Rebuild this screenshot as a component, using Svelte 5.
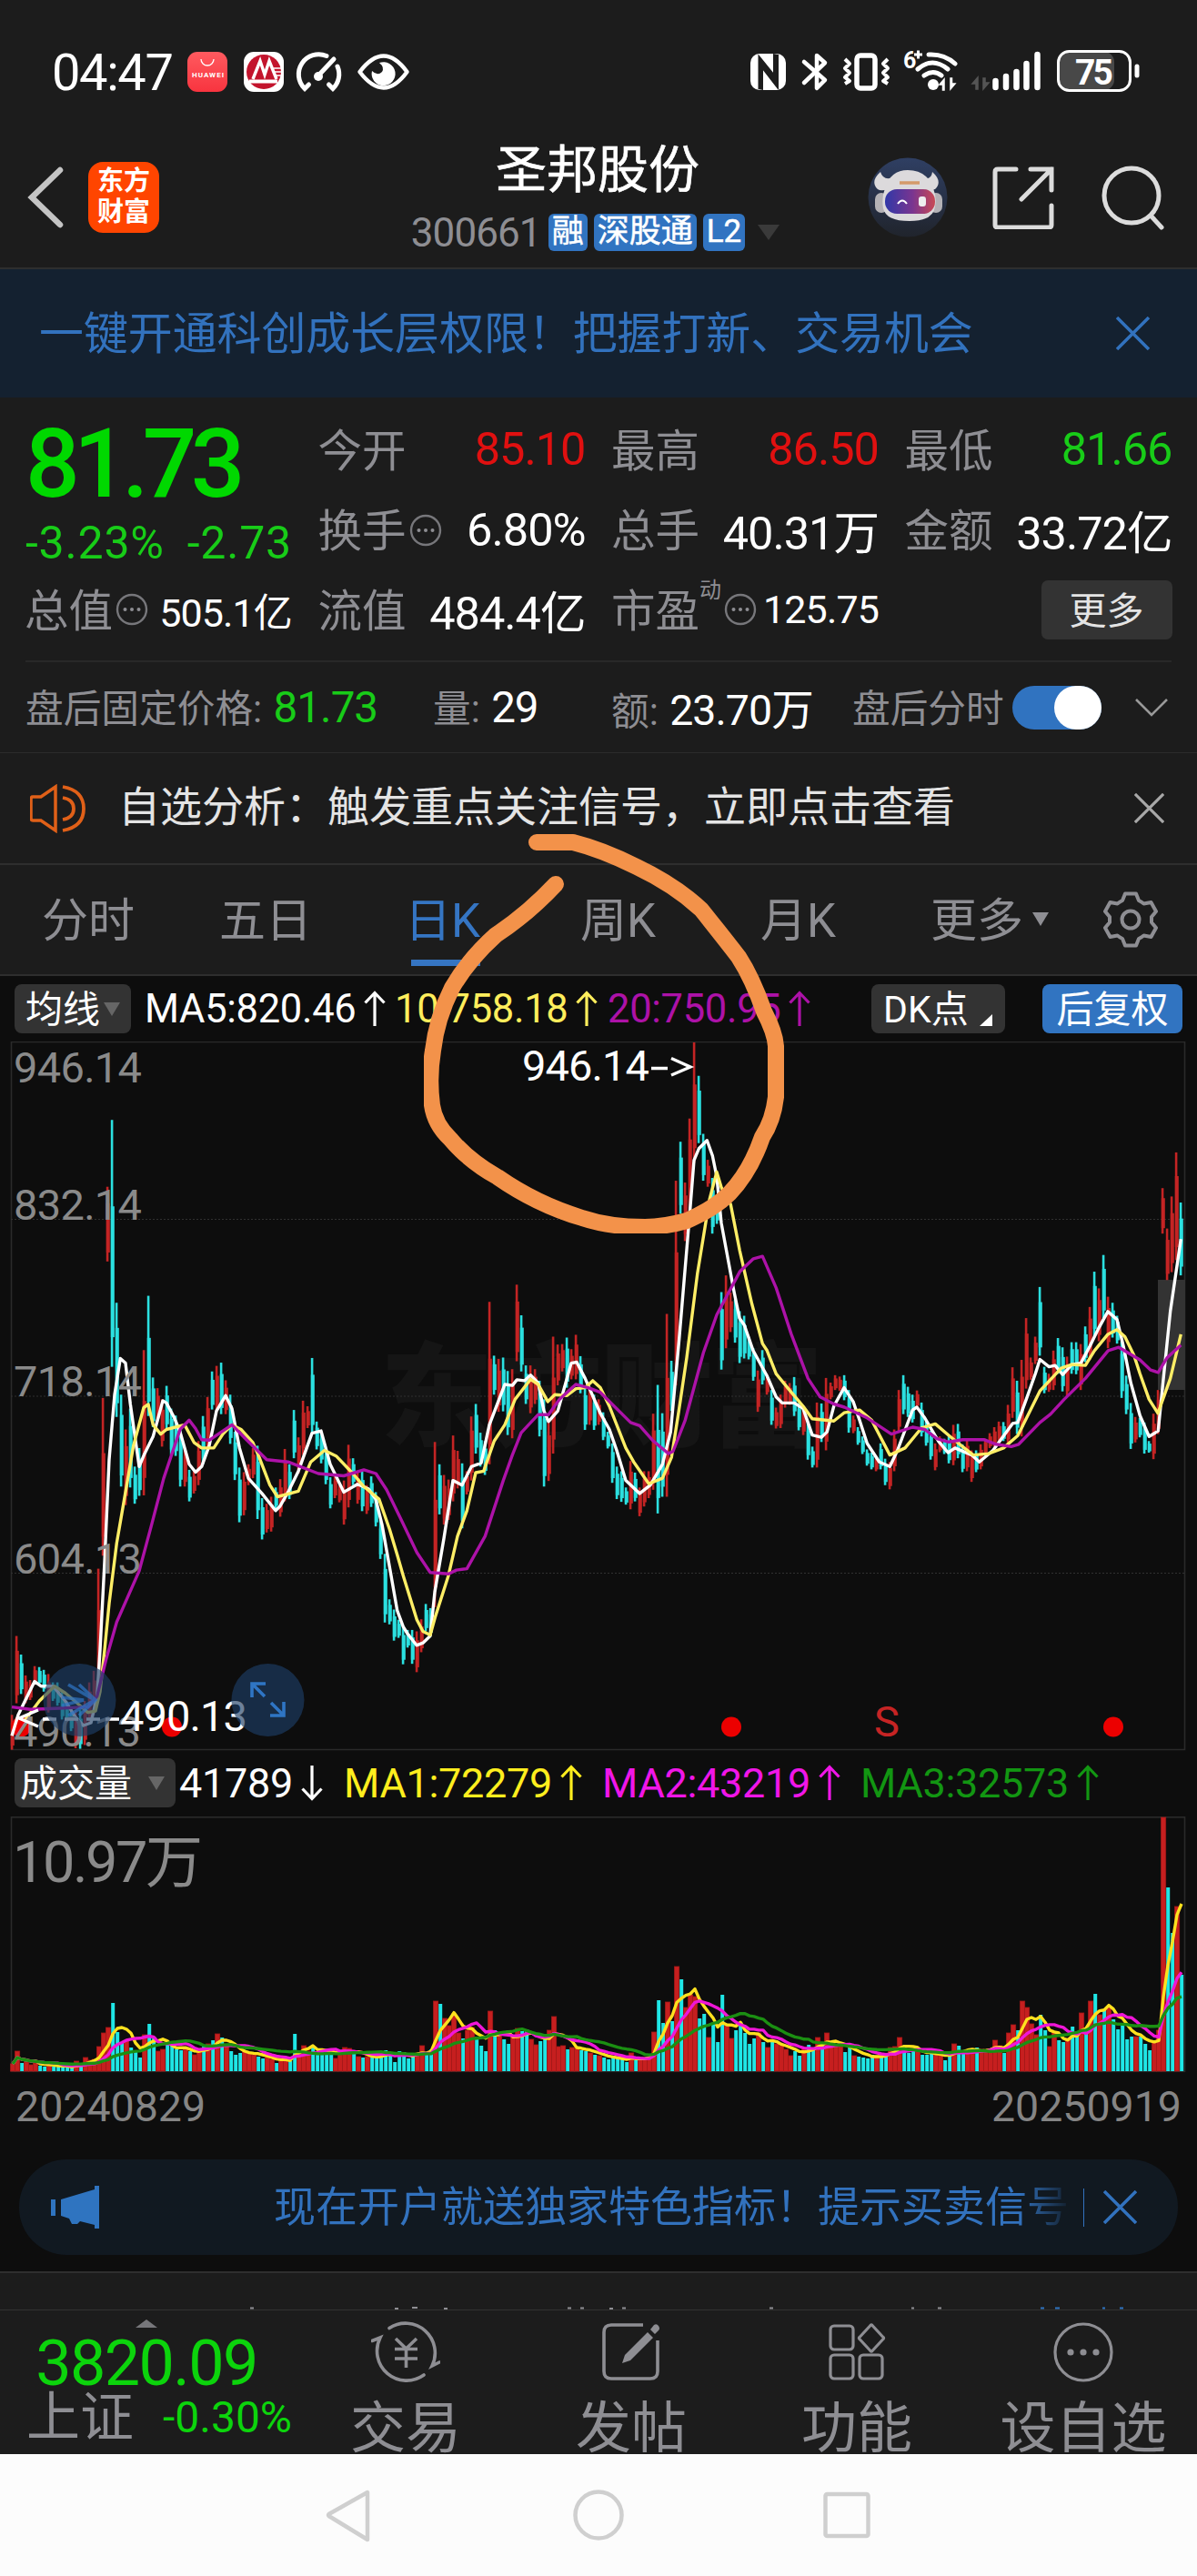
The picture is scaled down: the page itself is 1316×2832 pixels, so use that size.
<script lang="ts">
  const tabs = ["分时", "五日", "日K", "周K", "月K", "更多"];
  const activeTab = "日K";

  // one entry per day: u = up, d = down, then high and low as offsets from the period high
  const days = `u1480-1555 u1310-1455 d1350-1435 u1395-1455 u1405-1448 u1375-1415 d1377-1415 d1383-1430 u1392-1475 d1410-1450
    d1410-1460 d1430-1490 d1450-1495 d1465-1515 u1470-1552 d1470-1553 u1450-1545 u1410-1500 u1385-1480 u1165-1420
    u797-1137 u342-503 d198-730 d592-838 d790-988 u865-1028 d820-990 d945-1025 d905-1008 u694-1007
    d577-836 d753-860 u776-850 u800-902 d771-865 d820-920 d835-922 d865-988 u905-988 d952-1020
    u955-1003 u890-985 d836-940 u795-905 d740-822 u728-825 d721-832 u759-832 d790-896 d870-974
    d947-1065 u957-1050 u940-985 u905-970 d900-1058 d1013-1102 u1025-1087 u1010-1085 d990-1035 u972-1053
    u907-1020 d940-1015 d823-927 u882-960 u803-920 u815-862 d711-875 d848-908 d870-938 d905-983
    d968-1035 u965-1013 u985-1022 u975-1070 u898-1033 d927-985 u955-1025 d955-1041 u985-1047 d966-1032
    d1000-1074 d1060-1144 d1133-1281 d1231-1285 d1253-1320 d1275-1314 d1290-1371 d1297-1335 d1297-1370 u1300-1388
    u1274-1345 d1241-1300 d1250-1310 u892-1248 d940-1048 u963-1070 u973-1060 u878-1020 u911-992 d938-1078
    u955-1005 u837-975 d810-917 d872-945 d890-963 u590-940 d706-790 u713-827 d710-826 d739-877
    u735-884 u553-718 d619-740 d727-810 u727-830 u735-810 d760-880 d800-988 u850-976 u665-917
    u682-770 u681-740 d667-775 u692-757 u661-757 d707-787 d770-866 u775-855 d790-866 u800-855
    d828-888 d870-906 d895-980 d945-1015 d955-1021 d990-1027 u933-1037 d958-1020 u990-1052 u955-1031
    u955-1013 u831-995 d769-1046 d830-1010 u616-1010 d717-825 u329-770 d245-400 u333-459 u195-400
    u31-290 d103-248 d228-329 u284-342 d323-443 d360-422 d569-736 u533-690 u570-655 d585-678
    d610-722 d620-712 d665-714 d690-760 u738-827 d694-768 u745-790 d780-855 u818-863 u790-862
    u760-818 u765-812 d752-836 d808-867 u815-877 d850-930 d902-947 u807-947 d809-892 u754-910
    u764-800 u748-780 u751-782 d748-802 d780-872 u835-873 d860-898 d880-918 d908-943 d915-951
    u922-955 d895-951 d928-985 u935-994 u865-955 u780-870 d748-832 d773-838 d790-850 u781-818
    d807-880 d847-900 d868-930 u895-953 u880-914 d885-918 d880-938 u855-942 d853-927 d897-957
    u885-955 u910-978 d910-957 u897-951 u885-920 u873-905 u860-902 u848-892 d849-890 u812-897
    u731-840 d760-875 u715-880 u625-777 u710-758 u665-724 d558-706 d730-787 u745-784 u695-780
    d668-745 d688-783 u708-793 d677-745 d677-746 u681-780 d643-720 u601-715 d525-665 u561-675
    d489-625 u579-690 d592-667 d620-680 d675-797 d749-832 d808-907 u838-893 d840-882 d850-917
    d890-915 u831-929 u780-875 u345-443 u432-543 u363-526 u268-500 d376-533`;

  const volumes = [
    8, 22, 9, 10, 7, 9, 6, 5, 9, 5, 5, 5, 4, 4, 11, 7, 15, 12, 13, 27, 42, 48, 75, 43, 32, 33, 26, 21, 15, 40,
    52, 38, 22, 24, 30, 28, 24, 23, 24, 22, 18, 22, 28, 30, 34, 41, 37, 28, 22, 18, 20, 22, 20, 18, 16, 14, 15, 13, 9, 12,
    14, 11, 41, 22, 28, 22, 27, 20, 21, 24, 22, 14, 20, 26, 25, 20, 16, 15, 16, 15, 16, 18, 23, 20, 10, 22, 21, 14, 17, 20,
    28, 20, 24, 77, 74, 58, 50, 63, 42, 36, 45, 48, 38, 28, 22, 66, 45, 40, 35, 30, 38, 47, 44, 46, 35, 29, 33, 38, 45, 60,
    27, 28, 24, 26, 25, 23, 22, 20, 18, 17, 15, 13, 15, 14, 13, 10, 20, 12, 13, 14, 15, 43, 78, 53, 76, 55, 115, 101, 70, 84,
    82, 58, 63, 37, 52, 32, 84, 50, 36, 45, 54, 42, 30, 36, 42, 32, 26, 32, 30, 28, 24, 17, 22, 17, 26, 29, 24, 37, 28, 42,
    30, 28, 27, 21, 29, 17, 16, 15, 14, 18, 17, 16, 20, 26, 27, 37, 27, 20, 24, 22, 18, 18, 20, 18, 19, 12, 18, 30, 28, 20,
    20, 22, 26, 24, 22, 24, 34, 28, 20, 42, 51, 45, 77, 70, 52, 40, 62, 45, 27, 42, 34, 32, 36, 49, 42, 64, 44, 77, 85, 62,
    68, 70, 57, 46, 50, 35, 38, 38, 38, 30, 23, 32, 45, 279, 202, 152, 181, 106,
  ];

  const ma5 = `39,1525 60,1480 114,1408 135,1418 175,1418 215,1450 249,1485 275,1503 300,1497 320,1440 330,1340 345,1150 360,930 378,790
    397,712 414,722 430,810 459,945 475,920 505,880 537,803 549,808 575,840 594,870 624,940 645,957 665,945 690,900 714,825 744,792
    765,820 790,905 819,970 864,1003 909,1040 924,1030 950,1000 984,955 1029,873 1059,868 1089,940 1134,1000 1179,983 1215,993
    1239,1015 1260,1070 1290,1180 1310,1255 1330,1290 1344,1305 1374,1330 1395,1325 1419,1310 1434,1215 1464,1100 1494,975 1524,985
    1555,945 1587,937 1614,855 1665,768 1690,770 1705,758 1730,760 1750,748 1775,765 1794,825 1809,848 1840,825 1884,722 1902,720
    1930,755 1980,830 2010,865 2034,910 2064,975 2110,1003 2145,985 2185,940 2212,870 2240,670 2275,400 2289,285 2305,260 2332,242
    2350,275 2364,320 2379,420 2420,565 2439,625 2455,640 2484,695 2530,750 2560,795 2580,808 2620,808 2649,820 2679,877 2709,882
    2728,870 2750,815 2784,775 2814,805 2835,845 2860,895 2900,935 2935,945 2960,910 3010,823 3024,817 3050,840 3095,890 3127,915
    3150,905 3205,920 3230,935 3275,910 3340,852 3357,850 3385,800 3415,745 3430,714 3460,730 3480,727 3505,747 3535,725 3565,722
    3595,685 3625,645 3654,611 3684,628 3705,685 3730,765 3760,835 3790,880 3820,868 3835,770 3860,610 3895,455`;
  const ma10 = `84,1490 130,1450 180,1418 215,1433 255,1455 290,1475 315,1472 330,1430 345,1340 360,1240 385,1110 414,1000 440,900 474,818
    489,811 505,855 530,875 549,865 609,855 640,893 665,905 705,905 735,875 765,855 795,865 834,893 855,925 890,985 915,1010 984,998
    1025,935 1070,910 1110,923 1164,960 1200,988 1250,1015 1285,1080 1310,1135 1330,1180 1375,1275 1395,1300 1419,1308 1435,1270
    1479,1180 1509,1095 1540,1040 1569,958 1595,955 1630,890 1665,855 1699,800 1750,757 1775,768 1807,805 1830,790 1869,792 1900,777
    1930,775 1955,760 1980,775 2010,815 2064,905 2090,935 2140,982 2185,970 2215,925 2240,820 2265,710 2300,530 2340,370 2364,310
    2380,345 2410,380 2440,480 2480,595 2515,680 2530,695 2560,745 2610,785 2649,815 2679,842 2750,847 2784,829 2835,823 2875,845
    2935,920 2985,905 3039,862 3085,853 3130,878 3165,897 3210,920 3260,917 3310,905 3357,878 3430,782 3500,733 3535,725 3580,727
    3610,695 3654,660 3684,650 3710,665 3740,705 3760,745 3790,800 3819,830 3860,755 3895,660`;
  const ma20 = `39,1463 100,1468 180,1466 290,1463 320,1440 350,1360 385,1280 459,1170 500,1070 540,970 594,865 624,845 645,863 665,887
    690,888 765,855 810,885 880,930 950,935 1050,960 1134,965 1200,952 1240,960 1275,995 1320,1055 1375,1130 1419,1173 1480,1176
    1505,1168 1540,1165 1600,1095 1660,975 1690,920 1719,872 1775,833 1809,833 1845,800 1899,768 1940,775 1980,785 2080,850 2110,857
    2155,890 2205,917 2220,912 2260,845 2320,700 2364,618 2440,525 2485,497 2515,492 2560,560 2610,660 2665,755 2705,795 2750,810
    2785,817 2860,840 2940,875 3010,860 3050,865 3090,885 3130,892 3175,887 3245,887 3285,897 3335,902 3360,897 3430,850 3465,832
    3510,800 3580,755 3655,695 3690,688 3760,715 3795,737 3820,742 3850,710 3895,683`;

  const toY = (v: number) => (v - 30) / 1.96 + 0.5;
  const dayX = (i: number) => 13 + i * 5;

  const candles = days.split(/\s+/).map((d, i) => {
    const [high, low] = d.slice(1).split("-").map(Number);
    const range = low - high;
    const gap = range > 250 ? 0.35 : 0.22;
    return {
      up: d[0] === "u",
      x: dayX(i),
      top: toY(high),
      bottom: toY(low),
      bodyTop: toY(high + range * gap),
      bodyBottom: toY(low - range * 0.12),
    };
  });

  const toLine = (s: string) =>
    s
      .split(/\s+/)
      .map((p) => {
        const [x, y] = p.split(",").map(Number);
        return `${(x / 3).toFixed(1)},${toY(y).toFixed(1)}`;
      })
      .join(" ");

  const average = (n: number) =>
    volumes
      .map((_, i) => {
        const part = volumes.slice(Math.max(0, i - n + 1), i + 1);
        const mean = part.reduce((a, b) => a + b, 0) / part.length;
        return `${dayX(i) + 1},${(280 - mean).toFixed(1)}`;
      })
      .join(" ");

  const fellOnVolume = [254, 255];
  const volumeUp = (i: number) => candles[i].up && !fellOnVolume.includes(i);
</script>

{#snippet info()}
  <svg class="info" width="36" height="36" viewBox="0 0 36 36">
    <circle cx="18" cy="18" r="16" fill="none" stroke="#77777b" stroke-width="2.4" />
    <circle cx="10.5" cy="18" r="2" fill="#8e8e93" />
    <circle cx="18" cy="18" r="2" fill="#8e8e93" />
    <circle cx="25.5" cy="18" r="2" fill="#8e8e93" />
  </svg>
{/snippet}

{#snippet arrow(down = false)}
  <svg class="arrow" class:down width="26" height="40" viewBox="0 0 26 40">
    <path d="M13 39V3M2.500 13.500L13 2.500l10.500 11" fill="none" stroke="currentColor" stroke-width="3.2" />
  </svg>
{/snippet}

{#snippet cross(size)}
  <svg width={size} height={size} viewBox="0 0 36 36">
    <path d="M1 1l34 34M35 1L1 35" stroke="currentColor" stroke-width="3.4" />
  </svg>
{/snippet}

<div class="phone">
  <div class="status">
    <span class="clock">04:47</span>
    <svg width="250" height="50" viewBox="200 50 250 50">
      <defs>
        <linearGradient id="huawei" x1="0" y1="0" x2="0" y2="1">
          <stop offset="0" stop-color="#ff5a5f" />
          <stop offset="1" stop-color="#f8343f" />
        </linearGradient>
      </defs>
      <rect x="206" y="57" width="44" height="44" rx="11" fill="url(#huawei)" />
      <path d="M221 65a7 7 0 0 0 14 0" fill="none" stroke="#fff" stroke-width="1.3" />
      <text x="211" y="85" class="tiny" textLength="35">HUAWEI</text>
      <rect x="268" y="57" width="44" height="44" rx="11" fill="#fff" />
      <circle cx="290" cy="79" r="19" fill="#c3142d" />
      <path d="M278 87l8-20 5 15 5-15 8 20" fill="none" stroke="#fff" stroke-width="3.400" />
      <path d="M301 75h11M302 79h10M303 83h9" stroke="#fff" stroke-width="1.600" />
      <path d="M274 89.500h31" stroke="#fff" stroke-width="4" />
      <g fill="none" stroke="#fff" stroke-width="5" stroke-linecap="round">
        <path d="M359 61.500A22 22 0 0 0 335 97.500l4.500-4.500M371 73A22 22 0 0 1 366 97.500l-4.500-4.500M351 82L367 65" />
        <path d="M395.500 79Q422 44 447.500 79Q422 114 395.500 79z" stroke-width="4.500" stroke-linejoin="round" />
      </g>
      <circle cx="350" cy="84" r="5" fill="#fff" />
      <path d="M417 69a13 13 0 1 1-8 9q6 6 11 1q3-5-3-10z" fill="#fff" />
    </svg>
    <svg class="system" width="440" height="50" viewBox="820 50 440 50">
      <rect x="825" y="59" width="39" height="40" rx="10" fill="#fff" />
      <path d="M833.500 60V98L839 99V75L851 85V81L834 60zM856 98V60L850 59V83L838 72V76L855 98z" fill="#1c1c1c" />
      <path d="M884 68l23 20-9 9V61l9 8-23 22" fill="none" stroke="#fff" stroke-width="4.500" stroke-linejoin="round" stroke-linecap="round" />
      <rect x="942" y="61" width="20" height="36" rx="4" fill="none" stroke="#fff" stroke-width="5.500" />
      <path d="M929 65l5 5-5 5 5 5-5 5 5 4-5 3M976 65l-5 5 5 5-5 5 5 5-5 4 5 3" fill="none" stroke="#fff" stroke-width="4" stroke-linejoin="round" />
      <text x="993" y="75" class="six">6</text>
      <path d="M1005 60h9M1009.500 55.500v9" stroke="#fff" stroke-width="3" />
      <g fill="none" stroke="#fff" stroke-width="5" stroke-linecap="round">
        <path d="M1021 60Q1038 59 1050 70M1009 76Q1025 62 1042 76M1016 83Q1026 76 1035 83" />
      </g>
      <circle cx="1026" cy="93" r="6" fill="#fff" />
      <path d="M1033 93l5-6v12h-1.500V93zM1050 92l-5 6V86h1.500v6z" fill="#fff" stroke="#fff" stroke-width="1.500" />
      <path d="M1069 92l6-7v13h-2V92zM1087 91l-6 7V86h2v5z" fill="#555" stroke="#555" stroke-width="1.500" />
      <path d="M1094.500 89v7M1106 84v12M1117.500 79v17M1128.500 70v26M1140.500 60v36" stroke="#fff" stroke-width="6.500" stroke-linecap="round" />
      <rect x="1164" y="57" width="61" height="42" rx="11" fill="#484848" />
      <rect x="1163.500" y="56.500" width="79" height="43" rx="12" fill="none" stroke="#fff" stroke-width="3" />
      <path d="M1250 73v10" stroke="#fff" stroke-width="5" stroke-linecap="round" />
      <text x="1182" y="93" class="battery" textLength="42">75</text>
    </svg>
  </div>

  <header>
    <div class="left">
      <svg width="42" height="68" viewBox="0 0 42 68">
        <path d="M38 4L7 34l31 30" fill="none" stroke="#c4c4c4" stroke-width="6.500" stroke-linecap="round" />
      </svg>
      <div class="logo">东方<br />财富</div>
    </div>
    <div class="title">
      <h1>圣邦股份</h1>
      <div class="code">
        <span class="num">300661</span>
        <b>融</b><b>深股通</b><b>L2</b>
        <i class="caret"></i>
      </div>
    </div>
    <div class="actions">
      <svg width="88" height="88" viewBox="0 0 88 88">
        <defs>
          <linearGradient id="sky" x1="0" y1="0" x2="0" y2="1">
            <stop offset="0" stop-color="#2f3f63" />
            <stop offset="1" stop-color="#20242c" />
          </linearGradient>
          <linearGradient id="visor">
            <stop offset="0" stop-color="#3038a8" />
            <stop offset=".55" stop-color="#7a3590" />
            <stop offset="1" stop-color="#c84a55" />
          </linearGradient>
        </defs>
        <circle cx="44" cy="44" r="43.500" fill="url(#sky)" />
        <path d="M14 16Q5 24 8 31Q11 39 22 35L28 22Q17 26 14 16zM71 16Q80 24 77 31Q74 38 66 35L59 22Q70 26 71 16z" fill="#dcdadc" />
        <rect x="8" y="39" width="14" height="22" rx="7" fill="#b4b2b6" />
        <rect x="68" y="39" width="14" height="22" rx="7" fill="#b4b2b6" />
        <path d="M19 34Q25 14 44 14Q65 14 72 34Q76 44 74 54Q72 70 46 70Q20 70 17 56Q15 44 19 34z" fill="#dcdadc" />
        <rect x="19" y="35" width="55" height="27" rx="13" fill="url(#visor)" />
        <path d="M33 51q5-7 10 0" fill="none" stroke="#fff" stroke-width="2" />
        <rect x="56" y="43" width="8" height="11" rx="3" fill="#eee" />
        <path d="M35 28h22" stroke="#d49a6a" stroke-width="3.500" />
      </svg>
      <svg width="70" height="70" viewBox="0 0 70 70">
        <path d="M27 4H7q-3 0-3 3v58q0 3 3 3h56q3 0 3-3V44M43 4h23v23M66 4L33 37" fill="none" stroke="#dcdcdc" stroke-width="5" stroke-linecap="round" />
      </svg>
      <svg width="72" height="72" viewBox="0 0 72 72">
        <circle cx="34" cy="34" r="30" fill="none" stroke="#dcdcdc" stroke-width="5" />
        <path d="M56 57l11 12" stroke="#dcdcdc" stroke-width="5" stroke-linecap="round" />
      </svg>
    </div>
  </header>

  <div class="banner">
    <span>一键开通科创成长层权限！把握打新、交易机会</span>
    {@render cross(37)}
  </div>

  <section class="quote">
    <div class="price">81.73</div>
    <div class="cell"><label>今开</label><em class="red">85.10</em></div>
    <div class="cell"><label>最高</label><em class="red">86.50</em></div>
    <div class="cell"><label>最低</label><em class="green">81.66</em></div>
    <div class="cell change"><em class="green">-3.23%</em><em class="green">-2.73</em></div>
    <div class="cell"><label>换手{@render info()}</label><em>6.80%</em></div>
    <div class="cell"><label>总手</label><em>40.31万</em></div>
    <div class="cell"><label>金额</label><em>33.72亿</em></div>
    <div class="cell"><label>总值{@render info()}</label><em class="small">505.1亿</em></div>
    <div class="cell"><label>流值</label><em>484.4亿</em></div>
    <div class="cell"><label>市盈<sup>动</sup>{@render info()}</label><em class="small">125.75</em></div>
    <div class="cell more"><button>更多</button></div>
  </section>

  <div class="after">
    <span class="a1">盘后固定价格: <em class="green">81.73</em></span>
    <span class="a2">量: <em>29</em></span>
    <span class="a3">额: <em>23.70万</em></span>
    <span class="a4">盘后分时</span>
    <i class="toggle"></i>
    <svg width="36" height="22" viewBox="0 0 36 22">
      <path d="M1 2l17 17L35 2" fill="none" stroke="#999" stroke-width="2.600" />
    </svg>
  </div>

  <div class="signal">
    <svg width="62" height="54" viewBox="0 0 62 54">
      <path d="M3 14h9L28 3v48L12 40H3q-2 0-2-3V17q0-3 2-3z" fill="none" stroke="#e06018" stroke-width="3.500" />
      <path d="M36 3q23 4 23 24T36 51M36 15q12 2 12 12T36 39" fill="none" stroke="#e06018" stroke-width="3.800" />
    </svg>
    <span>自选分析：触发重点关注信号，立即点击查看</span>
    {@render cross(33)}
  </div>

  <nav class="tabs">
    {#each tabs as tab}
      <span class:active={tab === activeTab}>
        {tab}{#if tab === "更多"}<i class="caret"></i>{/if}
      </span>
    {/each}
    <svg width="62" height="62" viewBox="-31 -31 62 62">
      <path
        d="M-6-28.500H6L9-21Q12-19.500 14.500-17.500L22.500-19 28-9 23-3V3L28 9 22.500 19 14.500 17.500Q12 19.500 9 21L6 28.500H-6L-9 21Q-12 19.500-14.500 17.500L-22.500 19-28 9-23 3V-3L-28-9-22.500-19-14.500-17.500Q-12-19.500-9-21z"
        fill="none"
        stroke="#8e8e93"
        stroke-width="4"
        stroke-linejoin="round"
      />
      <circle r="9.500" fill="none" stroke="#8e8e93" stroke-width="4" />
    </svg>
  </nav>

  <section class="chart">
    <div class="legend">
      <button class="pick"><span>均线</span><i class="caret"></i></button>
      <span class="white">MA5:820.46{@render arrow()}</span>
      <span class="yellow">10:758.18{@render arrow()}</span>
      <span class="purple">20:750.95{@render arrow()}</span>
      <button class="dk"><span>DK点</span><i class="corner"></i></button>
      <button class="blue"><span>后复权</span></button>
    </div>

    <svg class="plot" width="1316" height="780" viewBox="0 0 1316 780">
      <text x="418" y="435" class="mark" textLength="487">东方财富</text>
      <path d="M12.500 0V778.500H1302.500V.5H12" fill="none" stroke="#2a2a2a" stroke-width="1.600" />
      <path d="M12 195.500H1303M12 390H1303M12 584.500H1303" stroke="#303030" stroke-dasharray="2 2" />
      <rect x="1273" y="262" width="30" height="121" fill="#333" />
      {#each candles as c}
        <g class={c.up ? "up" : "fall"}>
          <rect x={c.x - 1.2} y={c.top} width="2.6" height={c.bottom - c.top} />
          <rect x={c.x - 1.2} y={c.bodyTop} width="4" height={c.bodyBottom - c.bodyTop} />
        </g>
      {/each}
      <circle cx="23" cy="753.500" r="11" fill="#ec0000" />
      <circle cx="189" cy="753.500" r="11" fill="#ec0000" />
      <circle cx="804" cy="753.500" r="11" fill="#ec0000" />
      <circle cx="1224" cy="753.500" r="11" fill="#ec0000" />
      <text x="961" y="764" class="sell">S</text>
      <polyline points={toLine(ma5)} stroke="#fff" />
      <polyline points={toLine(ma10)} stroke="#ffee66" />
      <polyline points={toLine(ma20)} stroke="#ad12a8" />
      <g class="axis">
        <text x="15" y="45" textLength="141">946.14</text>
        <text x="15" y="196" textLength="141">832.14</text>
        <text x="15" y="390" textLength="141">718.14</text>
        <text x="15" y="585" textLength="141">604.13</text>
        <text x="15" y="775" textLength="140">490.13</text>
      </g>
      <text x="132" y="757.500" class="peak" textLength="140">490.13</text>
      <path d="M42 735L21 744l21 9M47 745h15M71 745h15M95 745h15M116 745h15" fill="none" stroke="#fff" stroke-width="3.400" />
      <text x="574" y="42.500" class="peak" textLength="140">946.14</text>
      <path d="M716 29.500h18M738 18.500l21 9.500-21 9" fill="none" stroke="#fff" stroke-width="3.400" />
      <g fill="#1d3e66" fill-opacity=".65">
        <circle cx="87.500" cy="724" r="40" />
        <circle cx="294.500" cy="724" r="40" />
      </g>
      <g fill="none" stroke="#2f75c4" stroke-width="3.600">
        <path d="M75 707l29 17-29 17M87 707l18 17-18 17M68 721l24 3-24 6" stroke-opacity=".7" />
        <path d="M277 721v-15h15M277 706l14 14M312 726v15h-15M312 741l-14-14" />
      </g>
    </svg>

    <div class="legend volume">
      <button class="pick"><span>成交量</span><i class="caret"></i></button>
      <span class="white">41789{@render arrow(true)}</span>
      <span class="bright">MA1:72279{@render arrow()}</span>
      <span class="pink">MA2:43219{@render arrow()}</span>
      <span class="leaf">MA3:32573{@render arrow()}</span>
    </div>

    <svg class="plot" width="1316" height="282" viewBox="0 0 1316 282">
      <rect x="12.500" y=".8" width="1290" height="279.500" fill="none" stroke="#2a2a2a" stroke-width="1.600" />
      {#each volumes as v, i}
        <rect
          class={volumeUp(i) ? "upbar" : "fallbar"}
          x={volumeUp(i) ? dayX(i) - 1.5 : dayX(i) - 0.8}
          y={280 - v}
          width={volumeUp(i) ? 5.2 : 4}
          height={v}
        />
      {/each}
      <polyline points={average(5)} stroke="#ffe11e" />
      <polyline points={average(10)} stroke="#f016d8" />
      <polyline points={average(20)} stroke="#1b8f12" />
      <text x="14" y="72" class="max" textLength="209">10.97万</text>
    </svg>

    <div class="dates"><span>20240829</span><span>20250919</span></div>

    <div class="promo">
      <svg width="56" height="48" viewBox="0 0 56 48">
        <path d="M0 15h5v18H0zM11 15L48 4V0h5v47h-5v-4l-16-4-3 3-6 0-3-6-9-3z" fill="#2f74c0" />
      </svg>
      <span>现在开户就送独家特色指标！提示买卖信号</span>
      <i></i>
      {@render cross(37)}
    </div>
  </section>

  <!-- only the tops of the next tab row show above the bar -->
  <div class="peek">
    <svg width="1316" height="3" viewBox="0 0 1316 3">
      <path d="M275 1.500h4M434 2h4M453 1h6M488 2h4M624 1.500h4M638 1.500h4M670 2h4M684 1.500h4M846 1.500h4M1002 1.500h3M1031 1.500h4" stroke="#8e8e93" stroke-width="2" />
      <path d="M1144 1.500h4M1160 1.500h5M1212 1.500h3M1231 1.500h4" stroke="#2f74c0" stroke-width="2" />
    </svg>
  </div>

  <footer>
    <div class="index">
      <i class="caret up-caret"></i>
      <div class="points">3820.09</div>
      <div class="row"><span>上证</span><em class="green">-0.30%</em></div>
    </div>
    <div class="item">
      <svg width="76" height="70" viewBox="0 0 76 70">
        <g fill="none" stroke="#8e8e93" stroke-width="3.600" stroke-linecap="round">
          <path d="M20 7.500A32.500 32.500 0 0 1 67 49l8-4M58 59A32.500 32.500 0 0 1 10 18l-9 3.500" />
        </g>
        <path d="M27 19l11.500 11L50 19M26 30.500h25M26 41h25M38.500 30v21" fill="none" stroke="#8e8e93" stroke-width="3.600" />
      </svg>
      <span>交易</span>
    </div>
    <div class="item">
      <svg width="68" height="70" viewBox="0 0 68 70">
        <path d="M47 4H12Q4 4 4 12V55q0 8 8 8H55q8 0 8-8V21" fill="none" stroke="#8e8e93" stroke-width="3.600" />
        <path d="M52 12l6 6-25 25-9 3 3-9zM55 9l4-5q3-2 5 1t0 5l-4 4z" fill="#8e8e93" />
      </svg>
      <span>发帖</span>
    </div>
    <div class="item">
      <svg width="64" height="70" viewBox="0 0 64 70">
        <g fill="none" stroke="#8e8e93" stroke-width="3.200">
          <rect x="3" y="5" width="25" height="26" rx="4" />
          <rect x="3" y="37" width="25" height="26" rx="4" />
          <rect x="35" y="37" width="25" height="26" rx="4" />
          <path d="M47 4.500q1-1 2 0l12 13q1 1 0 2l-12 13q-1 1-2 0l-12-13q-1-1 0-2z" />
        </g>
      </svg>
      <span>功能</span>
    </div>
    <div class="item">
      <svg width="70" height="70" viewBox="0 0 70 70">
        <circle cx="35" cy="34" r="31" fill="none" stroke="#8e8e93" stroke-width="3.200" />
        <circle cx="21" cy="34" r="3.600" fill="#8e8e93" />
        <circle cx="35" cy="34" r="3.600" fill="#8e8e93" />
        <circle cx="49" cy="34" r="3.600" fill="#8e8e93" />
      </svg>
      <span>设自选</span>
    </div>
  </footer>

  <svg class="keys" width="1316" height="134" viewBox="0 0 1316 134">
    <g fill="none" stroke="#cfcfcf" stroke-width="4.500" stroke-linejoin="round">
      <path d="M404 42v52L361.500 68q-1-1 0-2z" />
      <circle cx="658" cy="67" r="25.500" />
      <rect x="907.500" y="44" width="47" height="46" rx="2" />
    </g>
  </svg>

  <svg class="scribble" width="400" height="440" viewBox="466 916 400 440">
    <path
      d="M590 926H630Q662 934 700 953Q742 973 771 1000Q795 1030 812 1052Q827 1075 840 1112Q852 1135 853 1150V1206Q850 1232 838 1250Q825 1288 802 1312Q785 1329 755 1342Q730 1349 709 1349Q670 1349 640 1339Q590 1324 547 1294Q515 1276 495 1252Q478 1236 475 1215Q471 1185 476 1155Q480 1120 497 1086Q515 1055 545 1028Q580 1005 611 972"
    />
  </svg>
</div>

<style>
  :global(body) {
    margin: 0;
    background: #1c1c1c;
  }

  .phone {
    position: relative;
    width: 1316px;
    height: 2832px;
    overflow: hidden;
    background: #1c1c1c;
    color: #fff;
    font-family: Roboto, "Noto Sans CJK SC", sans-serif;
  }

  em,
  i {
    font-style: normal;
  }
  em {
    color: #fff;
    letter-spacing: -0.02em;
  }
  svg {
    display: block;
    flex: none;
  }
  button {
    border: 0;
    padding: 0;
    color: inherit;
    font-family: inherit;
  }
  .green {
    color: #18cc18;
  }
  .red {
    color: #e01010;
  }
  .caret {
    display: inline-block;
    border: 9px solid transparent;
    border-top: 15px solid currentColor;
    border-bottom: 0;
  }

  .status {
    height: 100px;
    padding: 0 62px 0 57px;
    display: flex;
    align-items: flex-end;
    box-sizing: border-box;
    margin-bottom: 40px;
  }
  .status svg {
    overflow: visible;
    margin-left: 4px;
  }
  .status svg.system {
    margin-left: auto;
    margin-right: -6px;
  }
  .clock {
    width: 139px;
    font-size: 56px;
    line-height: 44px;
    height: 42px;
    letter-spacing: -1.4px;
  }
  .tiny {
    font-size: 8px;
    fill: #fff;
    font-weight: 700;
  }
  .six {
    font-size: 25px;
    font-weight: 700;
    fill: #fff;
  }
  .battery {
    font-size: 39px;
    font-weight: 700;
    fill: #fff;
  }

  header {
    height: 156px;
    display: flex;
    align-items: center;
    justify-content: space-between;
    box-sizing: border-box;
    border-bottom: 2px solid #2e2e2e;
    padding: 0 34px 0 28px;
  }
  .left,
  .actions {
    display: flex;
    align-items: center;
    width: 330px;
  }
  .actions {
    justify-content: flex-end;
    gap: 48px;
  }
  .actions svg:last-child {
    margin-left: 2px;
  }
  .logo {
    width: 78px;
    height: 78px;
    margin-left: 27px;
    border-radius: 16px;
    background: #ff4500;
    font-size: 29px;
    font-weight: 700;
    line-height: 34px;
    text-align: center;
    padding-top: 4px;
    box-sizing: border-box;
  }
  .title {
    text-align: center;
  }
  h1 {
    margin: 2px 0 0 4px;
    font-size: 56px;
    line-height: 75px;
    font-weight: 400;
    -webkit-text-stroke: 0.6px #fff;
  }
  .code {
    display: flex;
    align-items: center;
    gap: 7px;
    height: 62px;
    margin-left: -1px;
    color: #8e8e93;
    font-size: 44px;
  }
  .code .num {
    margin-right: 1px;
    letter-spacing: -0.9px;
  }
  .code b {
    height: 41px;
    padding: 0 4px;
    border-radius: 6px;
    background: #3174c1;
    color: #fff;
    font-size: 35px;
    line-height: 39px;
    font-weight: 400;
    -webkit-text-stroke: 0.5px #fff;
  }
  .code .caret {
    border-width: 17px 12px 0;
    margin-left: 7px;
    color: #3a3a3a;
  }

  .banner {
    height: 141px;
    padding: 0 52px 0 43px;
    display: flex;
    align-items: center;
    justify-content: space-between;
    box-sizing: border-box;
    background: #142130;
    color: #3272be;
    font-size: 48.900px;
  }
  .banner span {
    padding-bottom: 8px;
  }

  .quote {
    height: 291px;
    margin: 0 28px;
    padding-top: 12px;
    display: grid;
    grid-template-columns: 293px 293px 293px 293px;
    column-gap: 29.500px;
    grid-template-rows: 90px 87px 88px;
    box-sizing: border-box;
    border-bottom: 2px solid #282828;
  }
  .price {
    color: #00d800;
    font-size: 105px;
    font-weight: 500;
    line-height: 124px;
    letter-spacing: -6.600px;
  }
  .cell {
    display: flex;
    align-items: center;
    justify-content: space-between;
    color: #8e8e93;
    font-size: 48.500px;
    white-space: nowrap;
  }
  .cell label {
    display: flex;
    align-items: center;
    margin: 0 0 5px -1px;
  }
  .cell em {
    font-size: 50.500px;
    margin: 0 0 1px 0;
  }
  .cell em.small {
    font-size: 43px;
  }
  .change {
    padding-top: 30px;
  }
  .cell.change em {
    font-size: 50px;
    letter-spacing: 0.8px;
  }
  .info {
    margin: 5px 0 0 3px;
  }
  sup {
    font-size: 24px;
    align-self: flex-start;
    line-height: 24px;
    margin-top: 4px;
  }
  sup + .info {
    margin-left: 3px;
  }
  .more {
    justify-content: flex-end;
  }
  .more button {
    width: 144px;
    height: 65px;
    border-radius: 7px;
    background: #333;
    color: #e4e4e4;
    font-size: 41px;
    padding-bottom: 6px;
  }

  .after {
    height: 100px;
    padding: 0 32px 0 28px;
    display: flex;
    align-items: center;
    border-bottom: 1px solid #2c2c2c;
    box-sizing: border-box;
    color: #8e8e93;
    font-size: 41.700px;
    white-space: nowrap;
  }
  .after span {
    padding-bottom: 3px;
  }
  .after em {
    font-size: 47.500px;
    margin-left: 2px;
  }
  .a1 {
    width: 448px;
  }
  .a2 {
    width: 196px;
  }
  .a3 {
    width: 265px;
  }
  .after .a3 em {
    font-size: 46.500px;
  }
  .a4 {
    width: 176px;
  }
  .toggle {
    width: 98px;
    height: 48px;
    border-radius: 24px;
    background: #3073c0;
    display: flex;
    justify-content: flex-end;
  }
  .toggle::after {
    content: "";
    width: 52px;
    height: 48px;
    border-radius: 24px;
    background: #fff;
  }
  .after svg {
    margin-left: auto;
  }

  .signal {
    height: 123px;
    padding: 0 36px 0 33px;
    display: flex;
    align-items: center;
    box-sizing: border-box;
    border-bottom: 2px solid #2e2e2e;
    color: #e4e4e4;
    font-size: 46px;
  }
  .signal span {
    margin: 0 0 11px 35px;
  }
  .signal svg:last-child {
    margin-left: auto;
    color: #a8a8a8;
  }

  .tabs {
    height: 122px;
    padding-left: 46px;
    display: grid;
    grid-template-columns: 195px 204px 193px 198px 187px 189px 62px;
    align-items: center;
    box-sizing: border-box;
    border-bottom: 2px solid #2e2e2e;
    color: #8e8e93;
    font-size: 51px;
  }
  .tabs span {
    height: 120px;
    padding-bottom: 6px;
    box-sizing: border-box;
    display: flex;
    align-items: center;
    justify-self: start;
  }
  .tabs .active {
    color: #3575c3;
    background: linear-gradient(#3575c3, #3575c3) no-repeat 7px 104px / 78px 7px;
  }
  .tabs .caret {
    margin: 4px 0 0 10px;
  }

  .chart {
    height: 1426px;
    background: #0d0d0d;
    border-bottom: 2px solid #2e2e2e;
    box-sizing: border-box;
  }
  .legend {
    height: 72px;
    padding: 0 16px;
    display: grid;
    grid-template-columns: 143px 275px 234px 291px 187px 154px;
    align-items: center;
    box-sizing: border-box;
    font-size: 43.500px;
    white-space: nowrap;
  }
  .legend > span {
    display: flex;
    align-items: center;
    letter-spacing: -0.3px;
  }
  .legend button {
    height: 54px;
    justify-self: start;
    display: flex;
    align-items: center;
    border-radius: 8px;
    background: #333;
    font-size: 41px;
  }
  .legend button span {
    padding-bottom: 7px;
  }
  .pick {
    width: 128px;
    padding-left: 12px;
  }
  .pick .caret {
    margin-left: 4px;
    border-width: 15px 9px 0;
    color: #666;
  }
  .legend .dk {
    width: 147px;
    padding-left: 13px;
    margin-left: -1px;
  }
  .corner {
    align-self: flex-end;
    margin: 0 0 8px 12px;
    border-left: 14px solid transparent;
    border-bottom: 13px solid #fff;
  }
  .legend .blue {
    width: 154px;
    justify-content: center;
    background: #3174c1;
  }
  .arrow {
    margin-left: 8px;
  }
  .arrow.down {
    transform: rotate(180deg);
  }
  .white {
    color: #fff;
  }
  .yellow {
    color: #ffee5c;
  }
  .purple {
    color: #ad12a8;
  }
  .bright {
    color: #ffee1e;
  }
  .pink {
    color: #f016e8;
  }
  .leaf {
    color: #129612;
  }

  .plot polyline {
    fill: none;
    stroke-width: 3.4;
    stroke-linejoin: round;
  }
  .up {
    fill: #c42424;
  }
  .fall {
    fill: #2be0e0;
  }
  .upbar {
    fill: #c61f1f;
    stroke: #a51818;
    stroke-width: 0.8;
  }
  .fallbar {
    fill: #1fe6e6;
  }
  .axis text,
  .max {
    fill: #8a8a8a;
    font-size: 47px;
  }
  .max {
    font-size: 63px;
  }
  .peak {
    fill: #fff;
    font-size: 47px;
  }
  .sell {
    fill: #c62424;
    font-size: 47px;
  }
  .mark {
    fill: #151515;
    font-size: 124px;
    font-weight: 900;
  }

  .legend.volume {
    grid-template-columns: 181px 181px 284px 284px 300px;
    padding-bottom: 2px;
    font-size: 45px;
  }
  .volume .pick {
    width: 177px;
    padding-left: 6px;
  }
  .volume .caret {
    margin-left: 18px;
  }

  .dates {
    padding: 0 17px;
    height: 95px;
    display: flex;
    justify-content: space-between;
    align-items: flex-start;
    line-height: 74px;
    box-sizing: border-box;
    color: #858585;
    font-size: 46.500px;
  }

  .promo {
    height: 105px;
    margin: 0 21px;
    padding: 0 45px 0 35px;
    display: flex;
    align-items: center;
    border-radius: 52px;
    box-sizing: border-box;
    background: #111921;
    color: #3272be;
    font-size: 46px;
  }
  .promo span {
    width: 880px;
    margin: 0 0 9px 189px;
    overflow: hidden;
    white-space: nowrap;
    -webkit-mask-image: linear-gradient(90deg, #000 820px, transparent 878px);
    mask-image: linear-gradient(90deg, #000 820px, transparent 878px);
  }
  .promo i {
    width: 1px;
    height: 42px;
    margin: 0 21px 0 11px;
    background: #3272be;
  }
  .promo svg:last-child {
    margin-left: auto;
  }

  .peek {
    height: 41px;
    display: flex;
    align-items: flex-end;
    border-bottom: 1px solid #333;
    box-sizing: border-box;
  }

  footer {
    height: 158px;
    display: grid;
    grid-template-columns: 322px 248px 248px 248px 250px;
    overflow: hidden;
    color: #8e8e93;
  }
  .index {
    display: flex;
    flex-direction: column;
    align-items: center;
  }
  .index .up-caret {
    border: 12px solid transparent;
    border-top: 0;
    border-bottom: 9px solid #77777b;
    margin-top: 10px;
  }
  .points {
    color: #0cd40c;
    font-size: 70px;
    line-height: 78px;
    letter-spacing: -1.6px;
  }
  .index .row {
    display: flex;
    align-items: center;
    gap: 32px;
    height: 42px;
    margin-left: 28px;
    line-height: 42px;
    font-size: 59px;
  }
  .index em {
    font-size: 48px;
    color: #0cd40c;
    letter-spacing: 0;
  }
  .item {
    display: flex;
    flex-direction: column;
    align-items: center;
    padding-top: 12px;
    font-size: 61px;
  }
  .item span {
    line-height: 97px;
    white-space: nowrap;
  }

  .keys {
    background: #fcfcfc;
  }

  /* hand-drawn ring lying over the tabs and the chart */
  .scribble {
    position: absolute;
    left: 466px;
    top: 916px;
    fill: none;
    stroke: #f3924a;
    stroke-width: 18;
    stroke-linecap: round;
    stroke-linejoin: round;
  }
</style>
